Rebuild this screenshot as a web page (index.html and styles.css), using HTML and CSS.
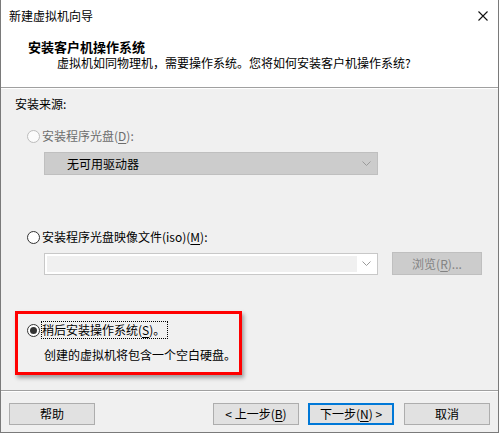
FILE: index.html
```html
<!DOCTYPE html>
<html lang="zh-CN">
<head>
<meta charset="utf-8">
<title>新建虚拟机向导</title>
<link rel="stylesheet" href="styles.css">
</head>
<body>
<div class="window">
  <div class="titlebar">
    <span class="title">新建虚拟机向导</span>
    <svg class="close" width="10" height="10" viewBox="0 0 10 10"><path d="M0.5 0.5L9.5 9.5M9.5 0.5L0.5 9.5" stroke="#111" stroke-width="1.1" fill="none"/></svg>
  </div>
  <div class="header">
    <div class="heading">安装客户机操作系统</div>
    <div class="subtitle">虚拟机如同物理机，需要操作系统。您将如何安装客户机操作系统?</div>
  </div>
  <div class="divider"></div>
  <div class="content">
    <div class="section-label">安装来源:</div>

    <div class="radio-row disabled first">
      <span class="radio"></span>
      <span class="label">安装程序光盘(<u>D</u>):</span>
    </div>
    <div class="combo combo-disabled">
      <span class="combo-text">无可用驱动器</span>
      <svg class="chev" width="9" height="5" viewBox="0 0 9 5"><path d="M0.5 0.5L4.5 4.5L8.5 0.5" stroke="#9a9a9a" fill="none"/></svg>
    </div>

    <div class="radio-row second">
      <span class="radio"></span>
      <span class="label">安装程序光盘映像文件(iso)(<u>M</u>):</span>
    </div>
    <div class="iso-row">
      <div class="combo combo-edit">
        <span class="edit-area"></span>
        <svg class="chev" width="9" height="5" viewBox="0 0 9 5"><path d="M0.5 0.5L4.5 4.5L8.5 0.5" stroke="#9a9a9a" fill="none"/></svg>
      </div>
      <div class="btn btn-disabled browse">浏览(<u>R</u>)...</div>
    </div>

    <div class="highlight">
      <div class="radio-row third">
        <span class="radio checked"></span>
        <span class="label focus">稍后安装操作系统(<u>S</u>)。</span>
      </div>
      <div class="desc">创建的虚拟机将包含一个空白硬盘。</div>
    </div>
  </div>
  <div class="footer">
    <div class="btn">帮助</div>
    <div class="nav">
      <div class="btn">&lt; 上一步(<u>B</u>)</div>
      <div class="btn btn-default">下一步(<u>N</u>) &gt;</div>
      <div class="btn">取消</div>
    </div>
  </div>
</div>
</body>
</html>
```

FILE: styles.css
```css
html, body {
  margin: 0;
  padding: 0;
  background: #f0f0f0;
}
body {
  font-family: "Noto Sans CJK SC", "Noto Sans", sans-serif;
  font-size: 12px;
  color: #000;
}
u {
  text-decoration: underline;
  text-underline-offset: 2px;
}
.window {
  width: 499px;
  height: 433px;
  box-sizing: border-box;
  border: 1px solid #7a7a7a;
  border-top: none;
  display: flex;
  flex-direction: column;
  background: #f0f0f0;
}
.titlebar {
  height: 31px;
  background: #fff;
  display: flex;
  align-items: center;
  justify-content: space-between;
  padding: 0 10px 0 8px;
  line-height: 16px;
}
.header {
  height: 56px;
  background: #fff;
  padding: 8px 0 0 27px;
  box-sizing: border-box;
}
.heading {
  font-size: 13px;
  font-weight: bold;
  line-height: 16px;
}
.subtitle {
  line-height: 16px;
  padding-left: 29px;
}
.divider {
  height: 1px;
  background: #a0a0a0;
  border-bottom: 1px solid #fff;
}
.content {
  flex: 1;
  padding: 7px 0 0 14px;
  box-sizing: border-box;
  border-bottom: 1px solid #a0a0a0;
}
.section-label {
  line-height: 16px;
}
.radio-row {
  display: flex;
  align-items: center;
  line-height: 16px;
  padding-left: 12px;
}
.radio-row.first { margin-top: 16px; }
.radio-row.second { margin-top: 54px; }
.radio {
  width: 13px;
  height: 13px;
  box-sizing: border-box;
  border: 1px solid #333;
  border-radius: 50%;
  background: #fff;
  margin-right: 2px;
  position: relative;
  flex: none;
}
.radio.checked::after {
  content: "";
  position: absolute;
  left: 2px;
  top: 2px;
  width: 7px;
  height: 7px;
  border-radius: 50%;
  background: #333;
}
.disabled { color: #6d6d6d; }
.disabled .radio {
  border-color: #bcbcbc;
  background: #fbfbfb;
}
.combo {
  width: 334px;
  box-sizing: border-box;
  margin-left: 29px;
  display: flex;
  align-items: center;
  justify-content: space-between;
}
.combo-disabled {
  margin-top: 8px;
  height: 23px;
  background: #cccccc;
  border: 1px solid #bfbfbf;
  padding: 0 6px 0 22px;
}
.combo-text { line-height: 16px; }
.iso-row {
  margin-top: 7px;
  display: flex;
  align-items: center;
}
.combo-edit {
  height: 22px;
  background: #fff;
  border: 1px solid #c8c8c8;
  padding: 2px 6px 2px 2px;
}
.edit-area {
  align-self: stretch;
  width: 310px;
  background: #f0f0f0;
}
.btn {
  width: 86px;
  height: 22px;
  box-sizing: border-box;
  border: 1px solid #adadad;
  background: #e1e1e1;
  display: flex;
  align-items: center;
  justify-content: center;
  line-height: 16px;
}
.btn-disabled {
  background: #cccccc;
  border-color: #bfbfbf;
  color: #838383;
  width: 90px;
  height: 23px;
}
.browse { margin-left: 14px; }
.btn-default {
  border: 2px solid #0078d7;
}
.highlight {
  margin-top: 36px;
  width: 227px;
  height: 64px;
  box-sizing: border-box;
  border: 3px solid #ff0000;
  box-shadow: 2px 3px 4px rgba(0, 0, 0, 0.35);
  padding: 8px 0 0 0;
}
.highlight .radio-row { padding-left: 9px; }
.focus {
  outline: 1px dotted #000;
  outline-offset: 0;
  padding-right: 2px;
}
.desc {
  margin-top: 9px;
  line-height: 16px;
  padding-left: 26px;
}
.footer {
  height: 41px;
  display: flex;
  align-items: flex-start;
  justify-content: space-between;
  padding: 11px 8px 0 8px;
  box-sizing: border-box;
  border-top: 1px solid #fff;
}
.nav {
  display: flex;
  gap: 10px;
}
.nav .btn:first-child { margin-right: -1px; }
```
